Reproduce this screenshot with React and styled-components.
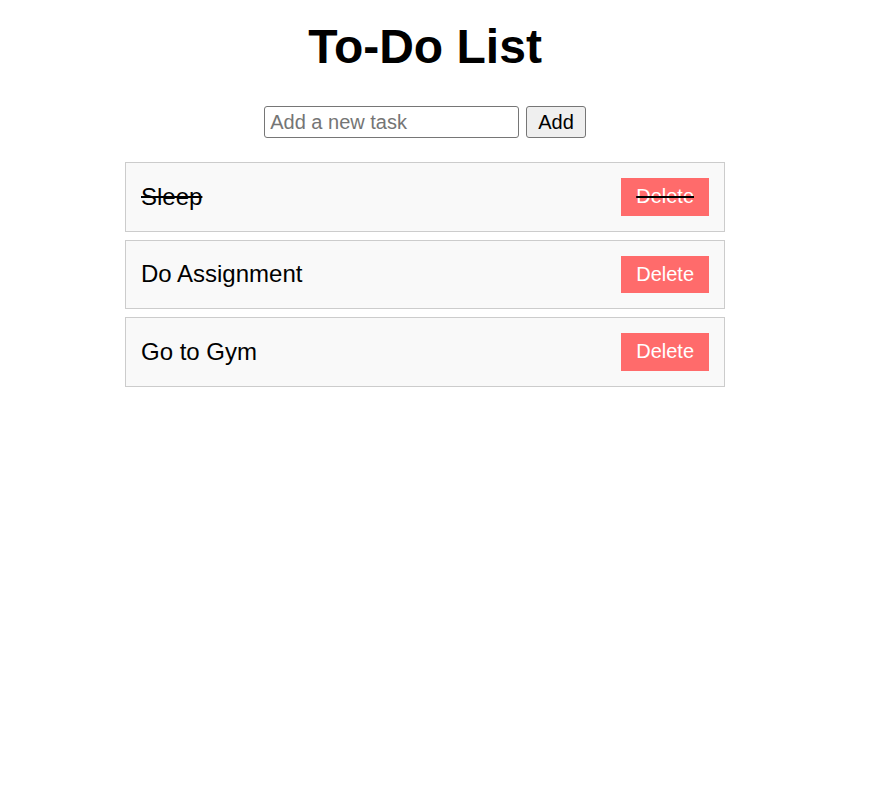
import styled, { createGlobalStyle } from 'styled-components'

const Global = createGlobalStyle`
  body {
    margin: 0;
    background: #ffffff;
    font-family: 'Liberation Sans', Arial, sans-serif;
    color: #000;
  }
`

const Page = styled.div`
  width: 850px;
  display: flex;
  flex-direction: column;
  align-items: center;
  padding-top: 19px;
`

const Title = styled.h1`
  margin: 0;
  font-size: 48px;
  line-height: 55px;
  font-weight: bold;
`

const Form = styled.div`
  display: flex;
  gap: 7px;
  margin-top: 32px;
`

const Input = styled.input`
  box-sizing: border-box;
  width: 255px;
  height: 32px;
  padding: 3px 5px;
  border: 1px solid #767676;
  border-radius: 3px;
  font-family: inherit;
  font-size: 20px;
  color: #000;
  background: #fff;

  &::placeholder {
    color: #757575;
  }
`

const AddButton = styled.button`
  box-sizing: border-box;
  height: 32px;
  padding: 0 11px;
  border: 1px solid #767676;
  border-radius: 3px;
  background: #efefef;
  font-family: inherit;
  font-size: 20px;
  color: #000;
`

const List = styled.ul`
  list-style: none;
  margin: 24px 0 0;
  padding: 0;
  width: 600px;
  display: flex;
  flex-direction: column;
  gap: 8px;
`

const Item = styled.li`
  box-sizing: border-box;
  display: flex;
  align-items: center;
  justify-content: space-between;
  height: 69.5px;
  padding: 15px;
  border: 1px solid #ccc;
  background: #f9f9f9;
  font-size: 24px;
  text-decoration: ${p => (p.$done ? 'line-through' : 'none')};
`

const DeleteButton = styled.button`
  box-sizing: border-box;
  height: 37.5px;
  padding: 0 15px;
  border: none;
  background: #ff6b6b;
  color: #fff;
  font-family: inherit;
  font-size: 20px;
`

const tasks = [
  { text: 'Sleep', done: true },
  { text: 'Do Assignment', done: false },
  { text: 'Go to Gym', done: false },
]

export default function App() {
  return (
    <>
      <Global />
      <Page>
        <Title>To-Do List</Title>
        <Form>
          <Input placeholder="Add a new task" />
          <AddButton>Add</AddButton>
        </Form>
        <List>
          {tasks.map(t => (
            <Item key={t.text} $done={t.done}>
              <span>{t.text}</span>
              <DeleteButton>Delete</DeleteButton>
            </Item>
          ))}
        </List>
      </Page>
    </>
  )
}
